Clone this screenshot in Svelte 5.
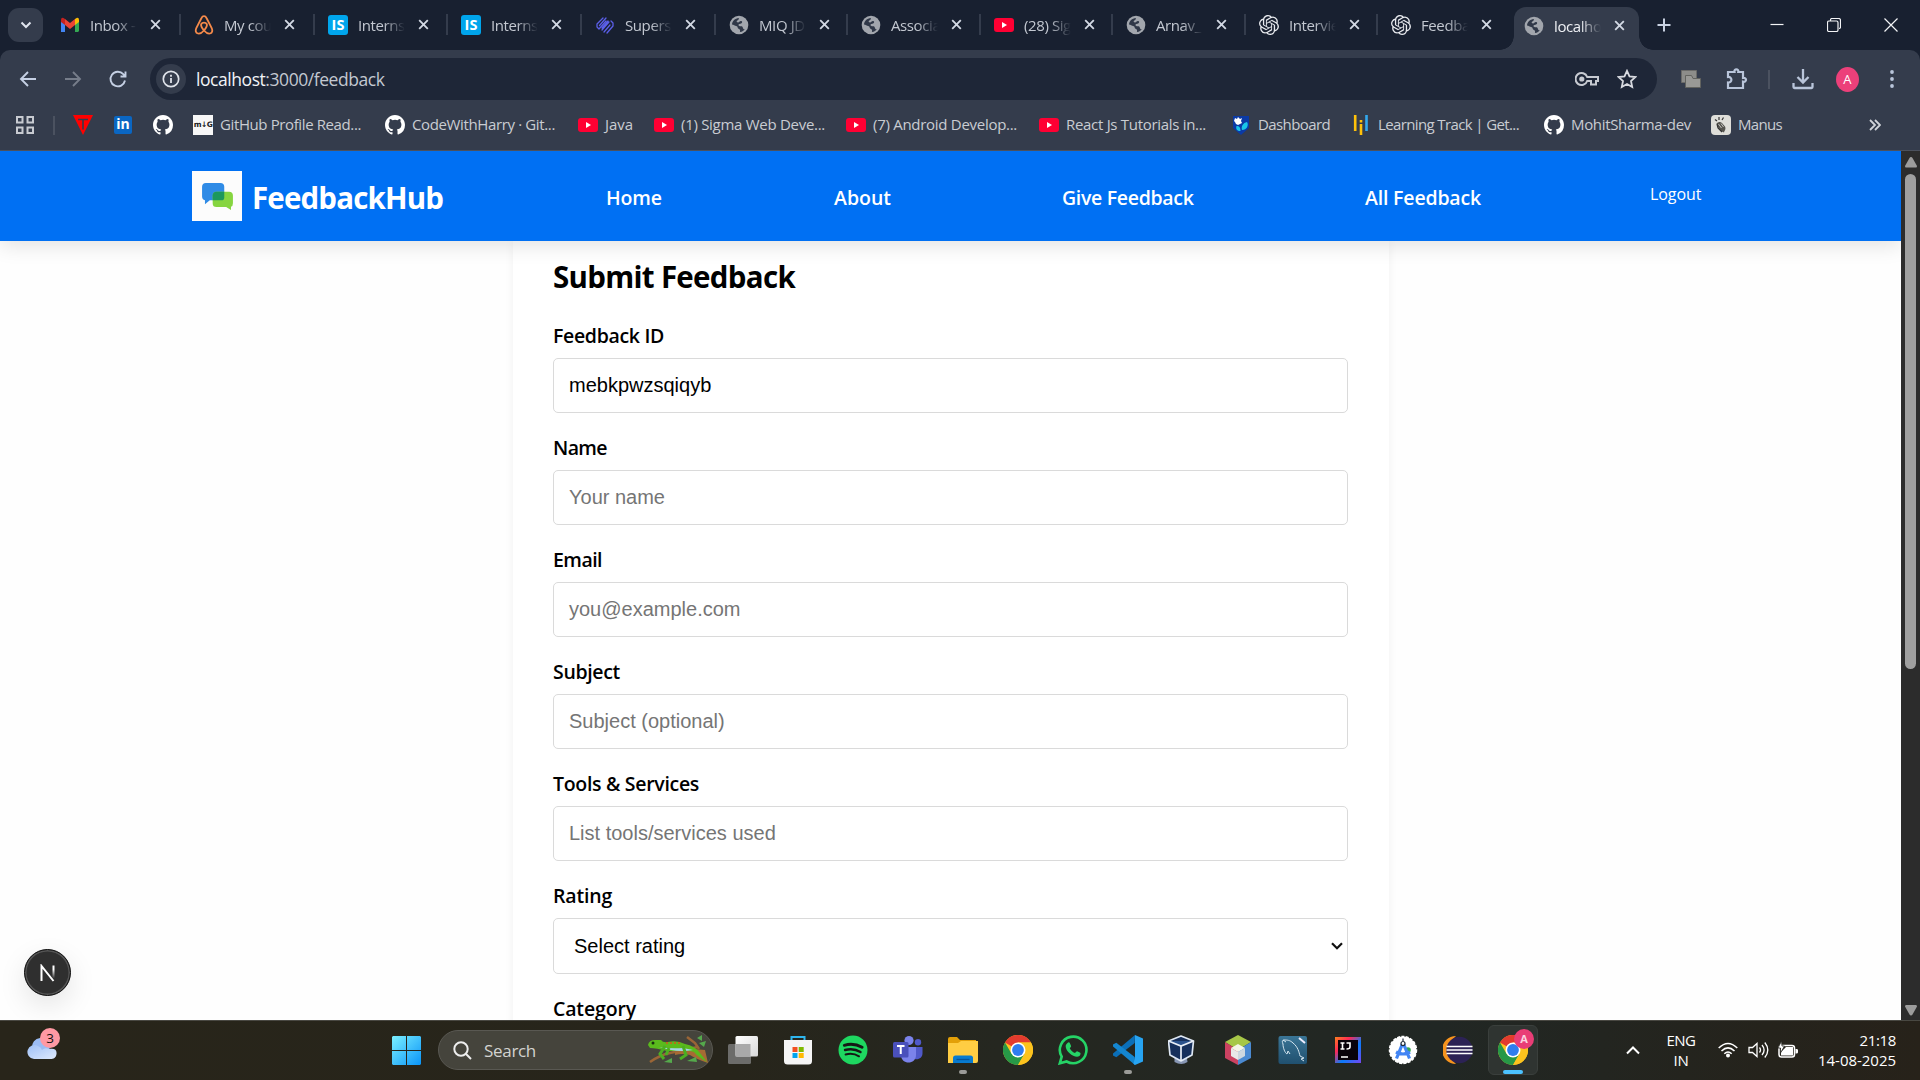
<script>
  // Spreads the tracking of a text so that it fills the given width in px.
  function fit(node, width) {
    const natural = node.getBoundingClientRect().width;
    const count = node.textContent.length;
    if (count > 0) node.style.letterSpacing = (width - natural) / count + 'px';
  }

  const tabs = [
    { icon: 'gmail', title: 'Inbox -' },
    { icon: 'airbnb', title: 'My cou' },
    { icon: 'is', title: 'Interns' },
    { icon: 'is', title: 'Interns' },
    { icon: 'super', title: 'Supers' },
    { icon: 'globe', title: 'MIQ JD' },
    { icon: 'globe', title: 'Associa' },
    { icon: 'youtube', title: '(28) Sig' },
    { icon: 'globe', title: 'Arnav_' },
    { icon: 'gpt', title: 'Intervie' },
    { icon: 'gpt', title: 'Feedba' },
    { icon: 'globe', title: 'localho', active: true }
  ];

  const bookmarks = [
    { icon: 'github', text: 'GitHub Profile Read...', width: 141, box: 192, readme: true },
    { icon: 'github', text: 'CodeWithHarry · Git...', width: 143, box: 193 },
    { icon: 'youtube', text: 'Java', width: 28, box: 76 },
    { icon: 'youtube', text: '(1) Sigma Web Deve...', width: 144, box: 192 },
    { icon: 'youtube', text: '(7) Android Develop...', width: 144, box: 193 },
    { icon: 'youtube', text: 'React Js Tutorials in...', width: 140, box: 192 },
    { icon: 'dash', text: 'Dashboard', width: 72, box: 120 },
    { icon: 'track', text: 'Learning Track | Get...', width: 141, box: 193 },
    { icon: 'github', text: 'MohitSharma-dev', width: 120, box: 167 },
    { icon: 'manus', text: 'Manus', width: 44, box: 90 }
  ];

  const fields = [
    { label: 'Feedback ID', width: 111, value: 'mebkpwzsqiqyb' },
    { label: 'Name', width: 54, hint: 'Your name' },
    { label: 'Email', width: 49, hint: 'you@example.com' },
    { label: 'Subject', width: 67, hint: 'Subject (optional)' },
    { label: 'Tools & Services', width: 146, hint: 'List tools/services used' }
  ];

  const apps = ['view', 'store', 'spotify', 'teams', 'files', 'chrome', 'whatsapp', 'code', 'vbox', 'cube', 'mysql', 'idea', 'studio', 'eclipse', 'chromeA'];
</script>

{#snippet icon(name)}
  {#if name === 'gmail'}
    <svg class="fav" viewBox="0 0 20 20"><path fill="#4285f4" d="M1 17V5l4 3v9H2z"/><path fill="#34a853" d="M15 17V8l4-3v11l-1 1z"/><path fill="#fbbc04" d="M15 4l2-1.2Q19 2.500 19 5v2l-4 3z"/><path fill="#c5221f" d="M1 5q0-2.500 2-2.200L5 4v6L1 7z"/><path fill="#ea4335" d="M5 4l5 4 5-4v6l-5 4-5-4z"/></svg>
  {:else if name === 'airbnb'}
    <svg class="fav" viewBox="0 0 20 20"><path fill="none" stroke="#f58a4a" stroke-width="1.800" d="M10 15.500C7 12 6.500 10.500 7.300 9c1-1.800 4.400-1.800 5.400 0 .8 1.500.3 3-2.700 6.500-2 2.300-4 3.500-6 3-2.500-.8-2.700-3-1.700-5.300L7.500 3c1.200-2.500 3.800-2.500 5 0l5.200 10.200c1 2.300.8 4.500-1.700 5.300-2 .5-4-.7-6-3z"/></svg>
  {:else if name === 'is'}
    <span class="fav is">IS</span>
  {:else if name === 'super'}
    <svg class="fav" viewBox="0 0 20 20"><g fill="none" stroke="#5b5fe8" stroke-width="1.300" stroke-linecap="round" stroke-linejoin="round"><path d="M8 3L2 9v3l2 2 7-8M11 3L4.500 10.500M7 13l6-7M16 6l2 2v3l-6 7M14 7l-7 8M15 10l-6 7"/></g></svg>
  {:else if name === 'globe'}
    <svg class="fav" viewBox="0 0 20 20"><circle cx="10" cy="10" r="9.300" fill="#a2a6ad"/><path fill="#303848" d="M3 9.500C3.300 6 6 3.300 9.800 3c.3 1.600-.8 2.200-1.800 2.700-1 .6 0 1.700 1 1.800 1.500 0 1.200-1.500 3-1.500 1.500.1 1.600 1.900.2 2.500-1.200.5-2.700.2-2.700 1.600 0 1.700 2.500.8 3.700 1.500 1.100.7.300 2.200 1.600 2.600.5.200.9.100 1.200-.1-1 1.600-2.800 2.700-4.900 3-.4-1 .3-1.600-.2-2.400-.5-.9-2-.7-2.200-1.900-.1-1-.6-1.600-1.600-1.700C6 10.900 4.500 9.800 3 9.500z"/></svg>
  {:else if name === 'youtube'}
    <svg class="fav" viewBox="0 0 20 20"><rect y="3" width="20" height="14" rx="3" fill="#ff0033"/><path fill="#fff" d="M8 7l5 3-5 3z"/></svg>
  {:else if name === 'gpt'}
    <svg class="fav" viewBox="0 0 24 24"><path fill="#e8eaee" d="M22.282 9.821a5.985 5.985 0 0 0-.516-4.910 6.046 6.046 0 0 0-6.510-2.900A6.065 6.065 0 0 0 4.981 4.182a5.985 5.985 0 0 0-3.998 2.900 6.046 6.046 0 0 0 .743 7.097 5.980 5.980 0 0 0 .510 4.911 6.051 6.051 0 0 0 6.515 2.900A5.985 5.985 0 0 0 13.260 24a6.056 6.056 0 0 0 5.772-4.206 5.990 5.990 0 0 0 3.998-2.900 6.056 6.056 0 0 0-.747-7.073zM13.260 22.430a4.476 4.476 0 0 1-2.876-1.040l.141-.081 4.779-2.758a.795.795 0 0 0 .393-.681v-6.737l2.020 1.169a.071.071 0 0 1 .038.052v5.583a4.504 4.504 0 0 1-4.495 4.494zM3.600 18.304a4.470 4.470 0 0 1-.535-3.014l.142.085 4.783 2.759a.771.771 0 0 0 .781 0l5.843-3.369v2.332a.080.080 0 0 1-.033.062L9.740 19.950a4.499 4.499 0 0 1-6.140-1.646zM2.341 7.896a4.485 4.485 0 0 1 2.366-1.973V11.600a.766.766 0 0 0 .388.677l5.815 3.354-2.020 1.169a.076.076 0 0 1-.071 0l-4.830-2.787A4.504 4.504 0 0 1 2.341 7.872zm16.597 3.855l-5.833-3.387L15.119 7.200a.076.076 0 0 1 .071 0l4.830 2.791a4.494 4.494 0 0 1-.677 8.105v-5.678a.790.790 0 0 0-.407-.667zm2.010-3.023l-.141-.085-4.774-2.782a.776.776 0 0 0-.785 0L9.409 9.230V6.897a.066.066 0 0 1 .028-.061l4.830-2.787a4.499 4.499 0 0 1 6.680 4.660zM8.307 12.863l-2.020-1.164a.080.080 0 0 1-.038-.057V6.075a4.499 4.499 0 0 1 7.376-3.454l-.142.081L8.704 5.460a.795.795 0 0 0-.393.681zm1.097-2.366L12.006 9l2.607 1.500v2.999l-2.597 1.500-2.607-1.500z"/></svg>
  {:else if name === 'github'}
    <svg class="fav" viewBox="0 0 16 16"><path fill="#fff" d="M8 0C3.580 0 0 3.580 0 8c0 3.540 2.290 6.530 5.470 7.590.4.070.55-.17.55-.38v-1.490c-2.010.37-2.530-.49-2.690-.94-.09-.23-.48-.94-.82-1.130-.28-.15-.68-.52-.01-.53.63-.01 1.080.58 1.230.82.72 1.210 1.870.87 2.330.66.070-.52.28-.87.51-1.070-1.780-.2-3.640-.89-3.640-3.950 0-.87.31-1.590.82-2.150-.08-.2-.36-1.020.08-2.120 0 0 .67-.21 2.200.82a7.420 7.420 0 0 1 4 0c1.530-1.040 2.200-.82 2.200-.82.44 1.100.16 1.920.08 2.120.51.56.82 1.270.82 2.150 0 3.070-1.870 3.750-3.650 3.950.29.25.54.73.54 1.480v2.200c0 .21.15.46.55.38A8.010 8.010 0 0 0 16 8c0-4.420-3.580-8-8-8z"/></svg>
  {:else if name === 'dash'}
    <svg class="fav" viewBox="0 0 20 20"><path fill="#0b3aa5" d="M2 1h16v12l-8 7-8-7z"/><path fill="#fff" d="M4 3l2 1 1-2 2 2 2-1-1 3 1 2-2 1-2 1-2-1-1-2-1-1z"/><path fill="#19c5e8" d="M16 7c2 3 0 8-5 8-1-4 1-7 5-8zM5.500 11c2.500 0 4 1 4 5-3.500 0-5-2-4-5z"/></svg>
  {:else if name === 'track'}
    <svg class="fav" viewBox="0 0 20 20"><path stroke="#ffc20a" stroke-width="2.600" d="M4.200 0v16M10 9v11M10 5v2.500"/><path stroke="#32a8ee" stroke-width="2.600" d="M15.500 0v16"/></svg>
  {:else if name === 'manus'}
    <svg class="fav" viewBox="0 0 20 20"><rect width="20" height="20" rx="4" fill="#deded9"/><path fill="#55544f" d="M5.500 8.500c2-2 4-2 5.500-.5l3 3.500c1.300 2.500-.5 4-1 6l-3-1.500-3-4z"/><path fill="none" stroke="#333" stroke-width="1.200" d="M6 9l1 4 4 4M6 6L4 4.500M8 5V2M11 5l1.500-2.500"/><path fill="none" stroke="#deded9" stroke-width=".8" d="M7.500 9l3 4M10 8.500l2.500 3.500"/></svg>
  {/if}
{/snippet}

{#snippet chrome()}
  <svg class="app" viewBox="0 0 30 30"><circle cx="15" cy="15" r="15" fill="#fcc31e"/><path fill="#e33b2e" d="M15 15L2 7.500A15 15 0 0 1 28 7.500H15z"/><path fill="#279847" d="M2 7.500A15 15 0 0 0 15 30l6.500-11.300L15 15 8.500 18.700z"/><path fill="#fcc31e" d="M15 7.500h13A15 15 0 0 1 15 30l6.500-11.300z"/><circle cx="15" cy="15" r="7.500" fill="#fff"/><circle cx="15" cy="15" r="5.900" fill="#2f7df0"/></svg>
{/snippet}

{#snippet app(name)}
  {#if name === 'view'}
    <svg class="app" viewBox="0 0 30 30"><defs><linearGradient id="vw" x2="1" y2="1"><stop stop-color="#fff"/><stop offset="1" stop-color="#d8d8d8"/></linearGradient></defs><rect x="0" y="9" width="23" height="20" rx="1.500" fill="#6c6c6a"/><rect x="7.500" y="1" width="22.500" height="20.500" rx="1.500" fill="url(#vw)"/><path fill="#a9a9a9" d="M7.500 9h15v12.500h-15z"/></svg>
  {:else if name === 'store'}
    <svg class="app" viewBox="0 0 30 30"><path fill="none" stroke="#2eb6ee" stroke-width="2" d="M8.500 7V2h13v5"/><path fill="#f5f5f5" d="M1 5h28v21q0 3.500-3.500 3.500h-21Q1 29.500 1 26z"/><path fill="#f25022" d="M9.500 12h5v5h-5z"/><path fill="#7fba00" d="M15.700 12h5v5h-5z"/><path fill="#00a4ef" d="M9.500 18h5v5h-5z"/><path fill="#ffb900" d="M15.700 18h5v5h-5z"/></svg>
  {:else if name === 'spotify'}
    <svg class="app" viewBox="0 0 30 30"><circle cx="15" cy="15" r="14.500" fill="#1ed760"/><g fill="none" stroke="#151815" stroke-linecap="round"><path stroke-width="2.900" d="M6.300 10.300c6-1.800 12.500-1 17.800 2"/><path stroke-width="2.400" d="M7 15c5.500-1.500 11-.8 15.500 2"/><path stroke-width="2" d="M7.600 19.500c4.800-1.200 9.500-.6 13.400 1.800"/></g></svg>
  {:else if name === 'teams'}
    <svg class="app" viewBox="0 0 30 30"><circle cx="25" cy="7.300" r="3.200" fill="#5059c9"/><path fill="#5059c9" d="M20 12h9.500v6c0 5-4 7-8 6z"/><circle cx="16" cy="5.500" r="4.600" fill="#7b83eb"/><path fill="#7b83eb" d="M8 12h15v8c0 10-15 10-15 0z"/><rect y="7" width="15.500" height="15.500" rx="1.500" fill="#4a50bb"/><path fill="none" stroke="#fff" stroke-width="2" d="M4 11h7.500M7.750 11v8"/></svg>
  {:else if name === 'files'}
    <svg class="app" viewBox="0 0 30 30"><path fill="#e3a008" d="M0 4q0-2 2-2h7l3 3h16v8H0z"/><path fill="#ffcd43" d="M0 8h10l3-2h17v20q0 2-2 2H0z"/><path fill="#087bd0" d="M5 28v-5q0-2.500 2.500-2.500h15q2.500 0 2.500 2.500v5z"/><path stroke="#06549b" stroke-width="1.300" d="M8.500 24.500h13"/></svg>
  {:else if name === 'chrome'}
    {@render chrome()}
  {:else if name === 'whatsapp'}
    <svg class="app" viewBox="0 0 30 30"><path fill="none" stroke="#25d366" stroke-width="2.600" d="M1.800 28.300l1.900-6.600A13.300 13.300 0 1 1 8.600 26.500z"/><path fill="#25d366" d="M9.500 8c1-1 2-.8 2.400.2l1.200 2.800c.2.800-1 1.800-1.300 2.200 1 2.200 2.700 3.700 5.200 4.800.6-.5 1.500-2 2.200-1.800l3 1.500c.8.500.2 2.500-.8 3.300-4 3-13.800-4-13.700-9.700 0-1.400.8-2.500 1.800-3.300z"/></svg>
  {:else if name === 'code'}
    <svg class="app" viewBox="0 0 30 30"><path fill="#0b6fb8" d="M22 0l-.3 8L3.300 22.300 0 20.500v-2z"/><path fill="#1486d0" d="M22 30l-.3-8L3.300 7.700 0 9.500v2z"/><path fill="#27a4f2" d="M22 0l8 3.500v23L22 30l-1.500-1.200L22 22z"/></svg>
  {:else if name === 'vbox'}
    <svg class="app" viewBox="1.500 0 30 30"><path fill="#8796b4" d="M8 20h12l1 7q-6 4-13 0z"/><path fill="#17305c" stroke="#dfe8f4" stroke-width="1.700" stroke-linejoin="round" d="M14.500 1L27 6l-1.500 14-11 6-11-6L2 6z"/><path fill="#2b528d" stroke="#e9eef6" stroke-width="1.700" d="M2 6l12.500 5L27 6M14.500 11v15"/></svg>
  {:else if name === 'cube'}
    <svg class="app" viewBox="0 0 30 30"><path fill="#a7c748" d="M15 0l13 7-13 8L2 7z"/><path fill="#cc4261" d="M2 7l13 8v15L2 23z"/><path fill="#4b8ad2" d="M28 7v16l-13 7V15z"/><path fill="#f4f5e8" d="M15 9l7 4-7 4-7-4z"/><path fill="#e9e9e9" d="M8 13l7 4v8l-7-4z"/><path fill="#cfd8e0" d="M22 13v8l-7 4v-8z"/></svg>
  {:else if name === 'mysql'}
    <svg class="app" viewBox="0 0 30 30"><defs><linearGradient id="ms" x2="0" y2="1"><stop stop-color="#3a7596"/><stop offset="1" stop-color="#20506f"/></linearGradient></defs><rect x=".5" y="1" width="28.500" height="28" rx="2" fill="url(#ms)"/><path fill="none" stroke="#d4e5ef" stroke-width="1" d="M9 19c-2-1-4-6-4-10-1-2-1-4 1-4 3 0 6 0 9 3 5 4 6 9 7 13l4 2-3 1 3 2M9 19l1-3 2 3M5 5l3 2"/><path stroke="#eef" stroke-width="2" d="M21 3l6 5"/></svg>
  {:else if name === 'idea'}
    <svg class="app" viewBox="0 0 30 30"><defs><linearGradient id="ij" x2="1" y2="1"><stop stop-color="#fc801d"/><stop offset=".3" stop-color="#fe2857"/><stop offset=".6" stop-color="#087cfa"/><stop offset="1" stop-color="#7646f0"/></linearGradient></defs><path fill="url(#ij)" d="M2 2h26v26H2z"/><path fill="#08020a" d="M5 5h20v20H5z"/><path fill="none" stroke="#fff" stroke-width="1.600" d="M7.500 8h4M9.500 8v6M7.500 14h4M13.500 8H17v4q0 2-3.500 2M8 22h7"/></svg>
  {:else if name === 'studio'}
    <svg class="app" viewBox="0 0 30 30"><circle cx="15" cy="15" r="13.500" fill="#fff" stroke="#fff" stroke-width="1.500" stroke-dasharray="3 1.400"/><circle cx="20" cy="15" r="2.800" fill="#34a853"/><path fill="none" stroke="#4285f4" stroke-width="3.200" d="M15 7.500L8.500 23.500M15 7.500l6.500 16M8 17q7 4 14 0"/><circle cx="15" cy="8.500" r="2" fill="#fff" stroke="#202b38" stroke-width="1.200"/><path stroke="#4a5260" stroke-width="1.500" d="M15 3.500v3"/></svg>
  {:else if name === 'eclipse'}
    <svg class="app" viewBox="0 0 30 30"><path fill="#f7941e" d="M13 1A14 14 0 0 0 13 29 18 18 0 0 1 13 1z"/><circle cx="16.500" cy="15" r="13.200" fill="#2c2255"/><path stroke="#fff" stroke-width="1.700" d="M3.500 11.500h26M3.500 15h26M3.500 18.500h26"/></svg>
  {/if}
{/snippet}

<div class="screen">
  <div class="tabstrip">
    <div class="tabsearch"><svg width="12" height="8" viewBox="0 0 12 8"><path d="M1.500 1.500L6 6l4.500-4.500" fill="none" stroke="#e0e5ee" stroke-width="2"/></svg></div>
    <div class="tabs">
      {#each tabs as tab}
        <div class="tab" class:active={tab.active}>
          {@render icon(tab.icon)}
          <span class="title">{tab.title}</span>
          <svg class="x" viewBox="0 0 12 12"><path d="M1.300 1.300l9.400 9.400M10.700 1.300l-9.400 9.400"/></svg>
        </div>
      {/each}
    </div>
    <svg class="plus" viewBox="0 0 14 14"><path d="M7 .5v13M.5 7h13"/></svg>
    <div class="winbtns">
      <svg viewBox="0 0 14 14"><path d="M.5 6.500h13"/></svg>
      <svg viewBox="0 0 14 14"><path d="M3.500 3V2q0-1.500 1.500-1.500h6.500q2 0 2 2V9q0 1.500-1.500 1.500"/><rect x=".5" y="3" width="10.500" height="10.500" rx="1.500"/></svg>
      <svg viewBox="0 0 14 14"><path d="M.5.5l13 13M13.500.5l-13 13"/></svg>
    </div>
  </div>

  <div class="chromebody">
    <div class="toolbar">
      <svg class="nav" viewBox="0 0 20 20"><path d="M18 10H3M10 3l-7 7 7 7"/></svg>
      <svg class="nav dim" viewBox="0 0 20 20"><path d="M2 10h15M10 3l7 7-7 7"/></svg>
      <svg class="nav" viewBox="0 0 20 20"><path d="M17 11.500A7.300 7.300 0 1 1 15.300 5.200L17.500 7.500M17.500 2.500v5h-5"/></svg>
      <div class="omnibox">
        <div class="info"><svg width="18" height="18" viewBox="0 0 18 18"><circle cx="9" cy="9" r="7.700" fill="none" stroke="#dfe3ea" stroke-width="1.700"/><path stroke="#dfe3ea" stroke-width="1.800" d="M9 8v5M9 4.800v1.900"/></svg></div>
        <span class="url"><span class="fit" use:fit={188.5}><b>localhost</b>:3000/feedback</span></span>
        <svg class="key" viewBox="0 0 24 16"><path d="M12.200 6A6 6 0 1 0 12.200 10H16v3.500h5V10h2V6z"/><circle cx="6.800" cy="8" r="1.600" fill="#c7cad1"/></svg>
        <svg class="star" viewBox="0 0 20 20"><path d="M10 1.800l2.500 5.500 6 .7-4.500 4 1.200 6-5.200-3-5.200 3L6 12 1.500 8l6-.7z"/></svg>
      </div>
      <svg class="ext" viewBox="0 0 20 18"><path fill="#8d8d8a" stroke="#6b6b69" d="M.5.500h15v12H.5z"/><path fill="#999996" stroke="#62635f" d="M4.500 5.500h6l1.500 3h7.500v9h-15z"/></svg>
      <svg class="puzzle" viewBox="0 0 22 22"><path d="M2 4h6.500c-.8-3.500 4.500-3.500 3.800 0H17v6c4-.8 4 4.500 0 3.700V20H2v-5.500c4.500.5 4.500-6 0-5.500z"/></svg>
      <span class="sep"></span>
      <svg class="download" viewBox="0 0 22 22"><path d="M11 1v13M5.500 9l5.500 5.500L16.500 9M1.500 15v4q0 1 1 1h17q1 0 1-1v-4"/></svg>
      <span class="avatar">A</span>
      <svg class="dots" viewBox="0 0 4 18"><circle cx="2" cy="2" r="1.900"/><circle cx="2" cy="9" r="1.900"/><circle cx="2" cy="16" r="1.900"/></svg>
    </div>

    <div class="bookmarks">
      <svg class="grid" viewBox="0 0 18 18"><path d="M1 1h5.500v5.500H1zM11.500 1H17v5.500h-5.500zM1 11.500h5.500V17H1zM11.500 11.500H17V17h-5.500z"/></svg>
      <span class="sep"></span>
      <svg class="fav tee" viewBox="0 0 20 20"><path fill="#f00" d="M0 0h20L10 20z"/><path stroke="#343c4c" stroke-width="1.600" d="M5 4.500h10M10 4.500v10"/></svg>
      <span class="linked">in</span>
      <span class="gh">{@render icon('github')}</span>
      {#each bookmarks as mark}
        <div class="mark" style:width="{mark.box}px">
          {#if mark.readme}<span class="readme">m↓G</span>{:else}{@render icon(mark.icon)}{/if}
          <span class="fit" use:fit={mark.width}>{mark.text}</span>
        </div>
      {/each}
      <svg class="more" viewBox="0 0 12 12"><path d="M1 1l5 5-5 5M6 1l5 5-5 5"/></svg>
    </div>
  </div>

  <div class="viewport">
    <div class="page">
      <header>
        <div class="logo"><svg width="31" height="27" viewBox="0 0 32 28"><path fill="#2f8be6" d="M4 0h15q4 0 4 4v11q0 3-3 3H8l-5 4v-4q-3-1-3-4V4q0-4 4-4z"/><path fill="#86d540" d="M15 9h13q4 0 4 4v8q0 3-2 3.500V28l-5-3H15q-4 0-4-4v-8q0-4 4-4z"/><path fill="#1c985c" d="M15 9h8v6q0 3-3 3h-9v-5q0-4 4-4z"/></svg></div>
        <span class="brand"><span class="fit" use:fit={191}>FeedbackHub</span></span>
        <a class="home" href="#home"><span class="fit" use:fit={56}>Home</span></a>
        <a class="about" href="#about"><span class="fit" use:fit={57}>About</span></a>
        <a class="give" href="#give"><span class="fit" use:fit={131.5}>Give Feedback</span></a>
        <a class="all" href="#all"><span class="fit" use:fit={116}>All Feedback</span></a>
        <span class="logout"><span class="fit" use:fit={51.5}>Logout</span></span>
      </header>
      <main>
        <h1><span class="fit" use:fit={242}>Submit Feedback</span></h1>
        {#each fields as field}
          <label>
            <span class="caption"><span class="fit" use:fit={field.width}>{field.label}</span></span>
            <span class="box" class:hint={field.hint}>{field.value ?? field.hint}</span>
          </label>
        {/each}
        <label class="rating">
          <span class="caption"><span class="fit" use:fit={59}>Rating</span></span>
          <span class="box select">Select rating<svg width="12" height="8" viewBox="0 0 12 8"><path d="M1 1.200l5 5 5-5" fill="none" stroke="#111" stroke-width="2.200"/></svg></span>
        </label>
        <label><span class="caption"><span class="fit" use:fit={83}>Category</span></span></label>
      </main>
      <div class="devtool"><svg width="18" height="18" viewBox="0 0 18 18"><defs><linearGradient id="nx" x2="0" y2="1"><stop offset=".3" stop-color="#fff"/><stop offset="1" stop-color="#fff" stop-opacity="0"/></linearGradient></defs><path fill="none" stroke="#fff" stroke-width="2" d="M2.500 17V2l12 15"/><path fill="url(#nx)" d="M13.500 1.500h2v13h-2z"/></svg></div>
    </div>
    <div class="scrollbar">
      <svg width="12" height="11" viewBox="0 0 12 11"><path fill="#9c9c9c" d="M6 0q1 0 1.500 1L12 9q0 1.500-1 1.500H1Q0 10.500 0 9l4.500-8Q5 0 6 0z"/></svg>
      <div class="thumb"></div>
      <svg class="down" width="12" height="11" viewBox="0 0 12 11"><path fill="#9c9c9c" d="M6 10.500q1 0 1.500-1L12 1.500Q12 0 11 0H1Q0 0 0 1.500l4.500 8q.5 1 1.500 1z"/></svg>
    </div>
  </div>

  <footer>
    <div class="weather">
      <svg width="31" height="24" viewBox="0 0 31 24"><defs><linearGradient id="cl" x2="1" y2="1"><stop stop-color="#9fc0f6"/><stop offset="1" stop-color="#dfeafd"/></linearGradient></defs><path fill="#9bbcf4" d="M6 12a9 9 0 0 1 18-2l-2 10H8z"/><path fill="url(#cl)" d="M8 23a7 7 0 1 1 4-13q3 1 4 4 3-3 7-1c6-1 8 1 7.500 5-.5 4-3 5-6 5z"/></svg>
      <span class="count">3</span>
    </div>
    <svg class="start" viewBox="0 0 29 29"><defs><linearGradient id="st" gradientUnits="userSpaceOnUse" x1="0" y1="0" x2="29" y2="29"><stop stop-color="#7bf0ff"/><stop offset="1" stop-color="#0a94f8"/></linearGradient></defs><path fill="url(#st)" d="M1 0h13v14H0V1zM15 0h13l1 1v13H15zM0 15h14v14H1l-1-1zM15 15h14v13l-1 1H15z"/></svg>
    <div class="search">
      <svg class="lens" viewBox="0 0 19 19"><circle cx="8" cy="8" r="6.700"/><path d="M12.800 12.800L18 18"/></svg>
      <span class="fit" use:fit={52}>Search</span>
      <svg class="lizard" viewBox="0 0 62 32">
        <path fill="none" stroke="#9a6536" stroke-width="2.500" d="M3 28q10-7 20-9t18-4l10-2M40 3l8 6 4 6"/>
        <path fill="#a66b34" d="M28 18q14-4 30-2l3 13q-12-4-18-8-8-2-15 0z"/>
        <path fill="#55a94c" d="M50 4l5-3v6zM52 9l7-2-2 6zM17 28l8-4v5zM40 27l9-4 1 5z"/>
        <path fill="#5aba1d" d="M1 11Q2 6 8 6h6q2 3 7 2 9-2 17 2 10 2 15 9l7 9q-9-5-13-10-6-2-13-1H20Q9 14 3 14z"/>
        <path fill="#a5d5e8" d="M12 13q12 2 24 1l10 2q-12 2-22 0z"/>
        <path fill="none" stroke="#4cae22" stroke-width="3" d="M18 12l-5 8 4 5M36 12l3 9-6 4M22 14l-3 7"/>
        <path stroke="#d35a19" stroke-width="1.500" stroke-dasharray="2 2" d="M19 9h16"/><circle cx="6" cy="9" r="1.500" fill="#17320e"/>
      </svg>
    </div>
    <div class="apps">
      {#each apps as name}
        {#if name === 'chromeA'}
          <div class="slot current">{@render chrome()}<span class="badge">A</span><i class="run"></i></div>
        {:else}
          <div class="slot">{@render app(name)}{#if name === 'files' || name === 'code'}<i class="run"></i>{/if}</div>
        {/if}
      {/each}
    </div>
    <svg class="up" viewBox="0 0 14 9"><path d="M1 7.500l6-6 6 6"/></svg>
    <div class="lang"><span class="fit" use:fit={29}>ENG</span><span class="fit" use:fit={15}>IN</span></div>
    <svg class="wifi" viewBox="0 0 20 16"><path d="M.7 6q9.300-9 18.600 0M3.500 9q6.500-6.300 13 0M6.300 11.800q3.700-3.600 7.400 0"/><circle cx="10" cy="13.500" r="2" fill="#fff" stroke="none"/></svg>
    <svg class="sound" viewBox="0 0 21 18"><path d="M1 6.500h3.500L9 2.500v13L4.500 11.500H1zM11.500 6.500q2 2.500 0 5M14 4q4.200 5 0 10M16.800 1.500q6 7.500 0 15"/></svg>
    <svg class="battery" viewBox="0 0 20 17"><rect x="1" y="4.500" width="15.500" height="11.500" rx="2.500" fill="none" stroke="#fff" stroke-width="1.500"/><path fill="#fff" d="M3 11l5-5h7v8.500H3zM17.500 8h1q1.500 0 1.500 1.200v2q0 1.200-1.500 1.200h-1z"/><path fill="#fff" stroke="#252420" stroke-width=".8" d="M3.500 0L0 7h2.500v5L6.500 5H4z"/></svg>
    <div class="clock"><span class="fit" use:fit={36.5}>21:18</span><span class="fit" use:fit={78}>14-08-2025</span></div>
  </footer>
</div>

<style>
  :global(body) { margin: 0; overflow: hidden; }
  .screen { width: 1920px; height: 1080px; display: flex; flex-direction: column; overflow: hidden; background: #182030; font-family: "Open Sans", "Noto Sans", sans-serif; color: #c3c8d1; }
  .screen * { box-sizing: border-box; }
  svg { display: block; flex: none; fill: none; }
  .fit { display: inline-block; white-space: nowrap; }

  .tabstrip { height: 50px; display: flex; align-items: center; flex: none; }
  .tabsearch { width: 35px; height: 34px; margin-left: 8px; border-radius: 11px; background: #343c4c; display: grid; place-items: center; flex: none; }
  .tabs { display: grid; grid-template-columns: 134px 134px 133px 134px 134px 132px 133px 132px 133px 132px 136px 125px; height: 50px; margin-left: 4px; flex: none; }
  .tab { display: flex; align-items: center; padding-left: 13px; border-right: 2px solid #343c4c; height: 21px; margin-top: 14px; }
  .tab .fav, .title { margin-top: 1px; }
  .tab:nth-child(11) { border-color: transparent; }
  .tab.active { position: relative; height: 43px; margin-top: 7px; padding-left: 10px; padding-bottom: 7px; border: 0; background: #343c4c; border-radius: 12px 12px 0 0; }
  .tab.active::before, .tab.active::after { content: ""; position: absolute; bottom: 0; width: 14px; height: 14px; }
  .tab.active::before { right: 100%; background: radial-gradient(circle at 0 0, transparent 13.500px, #343c4c 14px); }
  .tab.active::after { left: 100%; background: radial-gradient(circle at 100% 0, transparent 13.500px, #343c4c 14px); }
  .fav { width: 20px; height: 20px; flex: none; }
  .is { background: #00a5ec; color: #fff; border-radius: 3px; font: 700 14.500px/20px "Open Sans", sans-serif; text-align: center; }
  .title { width: 47px; margin-left: 10px; overflow: hidden; white-space: nowrap; font-size: 15px; letter-spacing: -.4px; line-height: 22px; mask-image: linear-gradient(90deg, #000 55%, transparent 100%); }
  .tab.active .title { color: #eef0f4; }
  .x { width: 11px; height: 11px; margin-left: 13px; stroke: #d3d9e4; stroke-width: 2; }
  .plus { width: 14px; height: 14px; margin-left: 18px; stroke: #c9d2e2; stroke-width: 2; }
  .winbtns { margin-left: auto; margin-right: 22px; display: flex; gap: 43px; }
  .winbtns svg { width: 14px; height: 14px; stroke: #f3f4f6; stroke-width: 1.200; }

  .chromebody { height: 101px; flex: none; background: #343c4c; border-radius: 10px 10px 0 0; border-bottom: 1px solid #4b515d; }
  .toolbar { display: flex; align-items: center; height: 58px; padding: 8px 26px 8px 18px; }
  .nav { width: 20px; height: 20px; margin-right: 25px; margin-bottom: 1px; stroke: #c5d0e4; stroke-width: 1.900; }
  .nav.dim { stroke: #767d8a; }
  .omnibox { width: 1507px; height: 42px; margin-left: -3px; border-radius: 21px; background: #1e2637; display: flex; align-items: center; padding-left: 6px; flex: none; }
  .info { width: 30px; height: 30px; border-radius: 50%; background: #343c4c; display: grid; place-items: center; }
  .url { margin-left: 10px; padding-bottom: 1px; font-size: 17.500px; flex: 1; }
  .url b { font-weight: 400; color: #f2f3f6; }
  .key { width: 24px; height: 16px; stroke: #c7cad1; stroke-width: 2; margin-right: 18px; }
  .star { width: 20px; height: 20px; stroke: #d8dae0; stroke-width: 1.800; margin-right: 20px; }
  .ext { width: 20px; height: 18px; margin-left: 24px; }
  .puzzle { width: 22px; height: 22px; margin-left: 25px; stroke: #b9c5da; stroke-width: 2.200; }
  .sep { width: 2px; height: 19px; background: #4b5260; }
  .toolbar .sep { margin-left: 20px; }
  .download { width: 22px; height: 22px; margin-left: 22px; stroke: #b9c5da; stroke-width: 2.300; }
  .avatar { width: 25px; height: 25px; margin-left: 22px; border-radius: 50%; background: #ec407a; color: #fff; font-size: 13px; line-height: 25px; text-align: center; }
  .dots { width: 4px; height: 18px; margin-left: 31px; fill: #b9c5da; }

  .bookmarks { display: flex; align-items: center; height: 34px; padding-left: 16px; font-size: 15px; color: #c9ccd2; }
  .grid { width: 18px; height: 18px; stroke: #c8cbd1; stroke-width: 2; }
  .bookmarks .sep { margin-left: 19px; }
  .tee { margin-left: 18px; }
  .linked { width: 18px; height: 18px; margin-left: 21px; border-radius: 2px; background: #0a66c2; color: #fff; font: 700 14px/16px "Open Sans", sans-serif; text-align: center; }
  .gh { margin: 0 20px 0 21px; }
  .mark { display: flex; align-items: center; gap: 7px; flex: none; white-space: nowrap; }
  .mark .fit { padding-bottom: 2px; }
  .readme { width: 20px; height: 20px; background: #f7f7f7; color: #222; font: 700 7.500px/20px "DejaVu Sans", sans-serif; letter-spacing: -.6px; text-align: center; overflow: hidden; flex: none; }
  .more { width: 12px; height: 12px; margin-left: 68px; stroke: #d0d3d9; stroke-width: 1.800; }

  .viewport { height: 869px; display: flex; flex: none; }
  .page { width: 1901px; background: #fefefe; position: relative; overflow: hidden; flex: none; }
  header { position: relative; z-index: 1; height: 90px; background: #0070f3; box-shadow: 0 4px 20px rgba(0, 0, 0, .12); display: flex; align-items: center; padding-left: 192px; color: #fff; }
  header a { color: inherit; text-decoration: none; font-size: 19.500px; font-weight: 600; padding-top: 2px; }
  .logo { width: 50px; height: 50px; background: #fcfcfc; display: grid; place-items: center; }
  .brand { width: 354px; margin-left: 10px; padding-top: 2px; font-size: 29.500px; font-weight: 700; }
  .home { width: 228px; }
  .about { width: 228px; }
  .give { width: 303px; }
  .all { width: 285px; }
  .logout { font-size: 16px; padding-bottom: 4px; }
  main { width: 876px; height: 900px; margin: 0 0 0 513px; padding: 15px 41px 0 40px; background: #fff; box-shadow: 0 0 10px rgba(0, 0, 0, .05); color: #000; }
  h1 { margin: 0 0 22px; font-size: 29.500px; line-height: 42px; font-weight: 700; }
  label { display: block; height: 112px; }
  .caption { display: block; height: 38px; font-size: 19.500px; line-height: 32px; font-weight: 600; }
  .box { display: flex; align-items: center; height: 55px; border: 1px solid #dadada; border-radius: 5px; padding: 0 15px 1px; font: 20px "Liberation Sans", Arial, sans-serif; background: #fff; }
  .box.hint { color: #757575; }
  .box.select { height: 56px; padding: 0 4px 0 20px; justify-content: space-between; }
  .rating { height: 113px; }
  .devtool { position: absolute; left: 24px; top: 798px; width: 47px; height: 47px; border-radius: 50%; background: #2f2f2f; border: 1px solid #101010; box-shadow: inset 0 0 0 1.500px #555, 0 10px 28px rgba(0, 0, 0, .1); display: grid; place-items: center; }
  .scrollbar { width: 19px; background: #2c2c2c; display: flex; flex-direction: column; align-items: center; padding-top: 6px; }
  .thumb { width: 11px; height: 495px; margin-top: 6px; border-radius: 6px; background: #9f9f9f; }
  .down { margin-top: auto; margin-bottom: 4px; }

  footer { height: 60px; flex: none; display: flex; align-items: center; padding-bottom: 1px; background: linear-gradient(90deg, #28251a, #27251b 38%, #252720 52%, #212724 75%, #25231c 92%, #27221a); border-top: 1px solid #494842; color: #fff; }
  .weather { position: relative; margin-left: 26px; width: 31px; margin-top: -4px; }
  .count { position: absolute; left: 14px; top: -8px; width: 20px; height: 20px; border-radius: 50%; background: #ff99a4; color: #111; font-size: 13.500px; line-height: 20px; text-align: center; }
  .start { width: 29px; height: 29px; margin-left: 335px; }
  .search { width: 275px; height: 40px; margin-left: 17px; border: 1px solid #595852; border-radius: 20px; background: #45443c; display: flex; align-items: center; padding: 0 3px 0 14px; color: #d3d3d0; font-size: 17px; flex: none; }
  .lens { width: 19px; height: 19px; margin-right: 12px; stroke: #eee; stroke-width: 2; }
  .lizard { width: 62px; height: 32px; margin-left: auto; }
  .apps { display: flex; gap: 5px; margin-left: 5px; }
  .slot { position: relative; width: 50px; height: 50px; display: grid; place-items: center; border: 1px solid transparent; border-radius: 6px; }
  .app { width: 30px; height: 30px; }
  .slot.current { background: #2f3431; border-color: #3a3f3c; }
  .run { position: absolute; left: 20px; bottom: 0; width: 8px; height: 4px; border-radius: 2px; background: #9b9b98; }
  .current .run { left: 14px; width: 20px; background: #4cc2ff; }
  .badge { position: absolute; left: 25px; top: 3px; width: 20px; height: 20px; border-radius: 50%; background: #e93d76; color: #fbd3e0; font-size: 11px; font-weight: 700; line-height: 20px; text-align: center; }
  .up { width: 14px; height: 9px; margin-left: 88px; stroke: #fff; stroke-width: 2; }
  .lang { width: 30px; margin-left: 26px; display: flex; flex-direction: column; align-items: center; font-size: 15px; line-height: 20px; padding-bottom: 1px; }
  .wifi { width: 20px; height: 16px; margin-left: 22px; stroke: #fff; stroke-width: 1.500; }
  .sound { width: 21px; height: 18px; margin-left: 10px; stroke: #fff; stroke-width: 1.300; }
  .battery { width: 20px; height: 17px; margin-left: 9px; margin-bottom: 2px; }
  .clock { margin-left: auto; margin-right: 24px; display: flex; flex-direction: column; align-items: flex-end; font-size: 15px; line-height: 20px; padding-bottom: 1px; }
</style>
